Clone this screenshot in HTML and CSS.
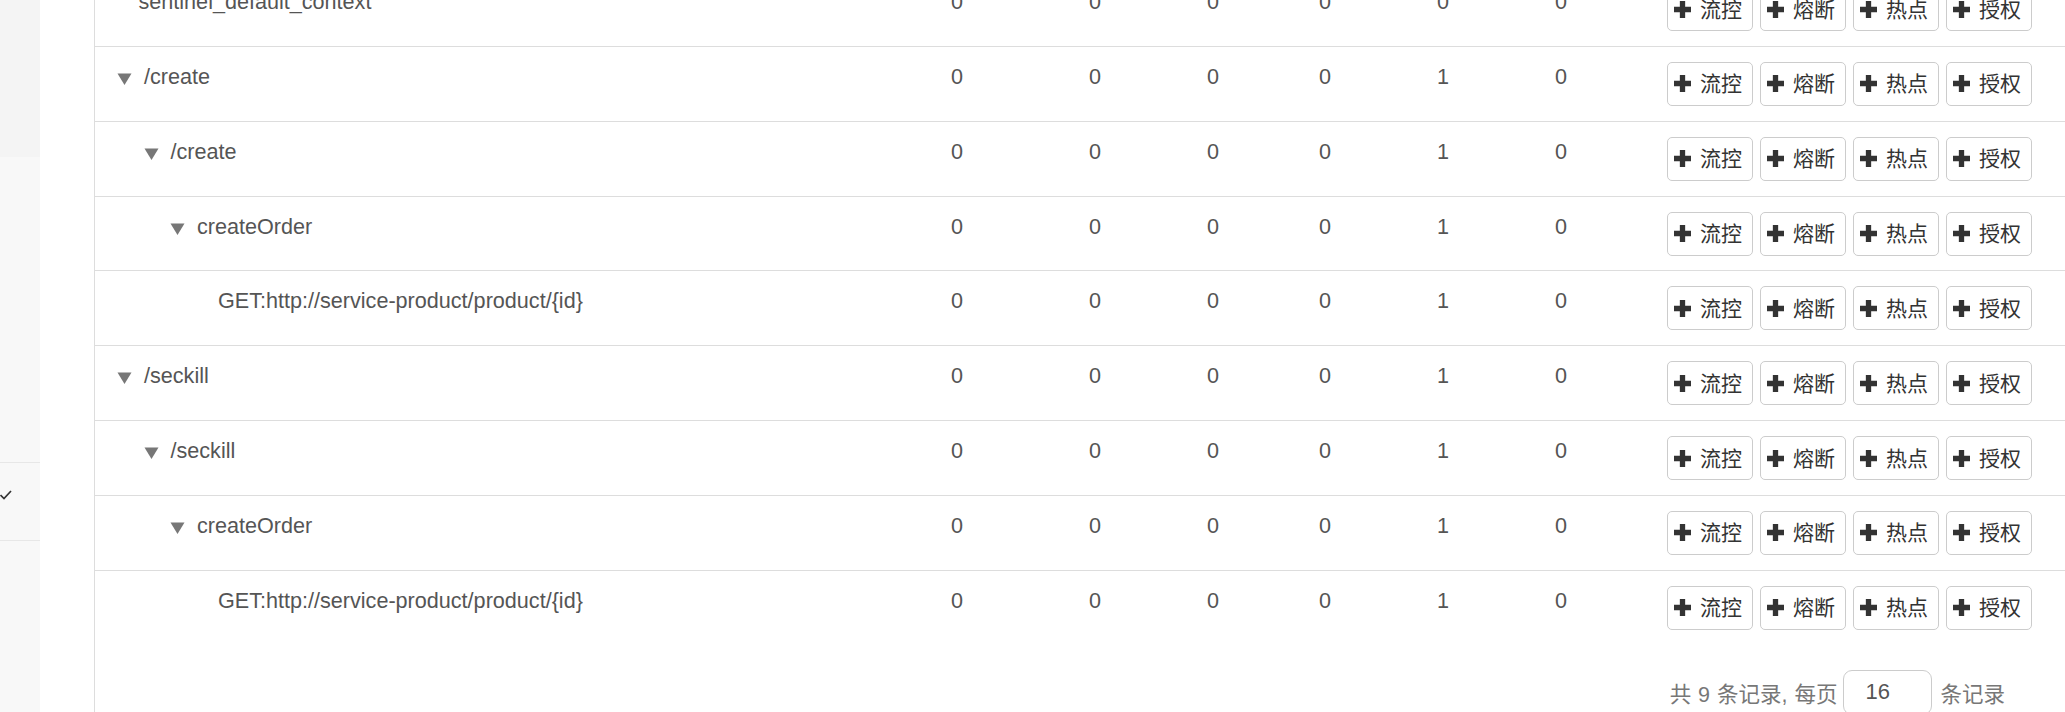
FILE: index.html
```html
<!DOCTYPE html>
<html lang="zh-CN">
<head>
    <meta charset="UTF-8">
    <meta name="viewport" content="width=device-width, initial-scale=1.0">
    <title>簇点链路</title>
    <link rel="stylesheet" href="styles.css">
</head>
<body>
    <div class="layout">
        <aside class="sidebar">
            <div class="side-block active"></div>
            <div class="side-block"></div>
            <div class="side-item">
                <svg class="check" width="12" height="10" viewBox="0 0 12 10"><polyline points="0.5,5 4,8.5 11,1" fill="none" stroke="#333" stroke-width="1.7"/></svg>
            </div>
            <div class="side-item last"></div>
        </aside>

        <main class="main">
            <div class="panel">
                <table class="resource-table">
                    <colgroup>
                        <col class="col-name">
                        <col class="col-pass">
                        <col class="col-block">
                        <col class="col-thread">
                        <col class="col-rt">
                        <col class="col-min">
                        <col class="col-minb">
                        <col>
                    </colgroup>
                    <tbody id="rows"></tbody>
                </table>

                <div class="pager">
                    <span class="pager-text">共 9 条记录, 每页</span>
                    <input type="text" class="page-size" value="16">
                    <span class="pager-text">条记录</span>
                </div>
            </div>
        </main>
    </div>

    <script>
        const resources = [
            { name: 'sentinel_default_context', depth: 0, leaf: true, stats: [0, 0, 0, 0, 0, 0] },
            { name: '/create', depth: 0, leaf: false, stats: [0, 0, 0, 0, 1, 0] },
            { name: '/create', depth: 1, leaf: false, stats: [0, 0, 0, 0, 1, 0] },
            { name: 'createOrder', depth: 2, leaf: false, stats: [0, 0, 0, 0, 1, 0] },
            { name: 'GET:http://service-product/product/{id}', depth: 3, leaf: true, stats: [0, 0, 0, 0, 1, 0] },
            { name: '/seckill', depth: 0, leaf: false, stats: [0, 0, 0, 0, 1, 0] },
            { name: '/seckill', depth: 1, leaf: false, stats: [0, 0, 0, 0, 1, 0] },
            { name: 'createOrder', depth: 2, leaf: false, stats: [0, 0, 0, 0, 1, 0] },
            { name: 'GET:http://service-product/product/{id}', depth: 3, leaf: true, stats: [0, 0, 0, 0, 1, 0] }
        ];

        const actions = ['流控', '熔断', '热点', '授权'];
        const plusIcon = '<svg class="plus" width="16" height="16" viewBox="0 0 16 16"><path d="M5.5 0h5v5.5H16v5h-5.5V16h-5v-5.5H0v-5h5.5z" fill="#333"/></svg>';
        const caret = '<svg class="caret" width="15" height="12" viewBox="0 0 15 12"><polygon points="0.5,0.5 14.5,0.5 7.5,12" fill="#777"/></svg>';

        const tbody = document.getElementById('rows');

        resources.forEach(res => {
            const tr = document.createElement('tr');

            const nameCell = document.createElement('td');
            const node = document.createElement('div');
            node.className = `node depth-${res.depth}` + (res.leaf ? ' leaf' : '');
            node.innerHTML = (res.leaf ? '' : caret);
            const label = document.createElement('span');
            label.className = 'node-name';
            label.textContent = res.name;
            node.appendChild(label);
            nameCell.appendChild(node);
            tr.appendChild(nameCell);

            res.stats.forEach(value => {
                const td = document.createElement('td');
                td.className = 'num';
                td.textContent = value;
                tr.appendChild(td);
            });

            const actionCell = document.createElement('td');
            const group = document.createElement('div');
            group.className = 'actions';
            actions.forEach(text => {
                const btn = document.createElement('button');
                btn.type = 'button';
                btn.className = 'btn-add';
                btn.innerHTML = plusIcon + '<span>' + text + '</span>';
                group.appendChild(btn);
            });
            actionCell.appendChild(group);
            tr.appendChild(actionCell);

            tbody.appendChild(tr);
        });
    </script>
</body>
</html>
```

FILE: styles.css
```css
* {
    margin: 0;
    padding: 0;
    box-sizing: border-box;
}

html,
body {
    height: 100%;
    overflow: hidden;
}

body {
    font-family: 'Liberation Sans', 'Noto Sans CJK SC', sans-serif;
    font-size: 21.6px;
    color: #555;
    background: #fff;
}

.layout {
    display: flex;
    height: 100vh;
    overflow: hidden;
}

/* left menu, only its edge is in view */
.sidebar {
    width: 40px;
    flex: none;
    display: flex;
    flex-direction: column;
    background: #f8f8f8;
}

.side-block {
    height: 305px;
}

.side-block.active {
    height: 157px;
    background: #f4f4f4;
}

.side-item {
    height: 78px;
    border-top: 1px solid #e7e7e7;
    padding-top: 27px;
}

.side-item.last {
    flex: 1;
}

.check {
    display: block;
}

.main {
    flex: 1;
    padding-left: 54px;
}

.panel {
    border-left: 1px solid #ddd;
    margin-top: -29px;
    min-height: calc(100vh + 29px);
}

.resource-table {
    width: 100%;
    border-collapse: collapse;
    table-layout: fixed;
}

.col-name { width: 844px; }
.col-pass { width: 138px; }
.col-block { width: 118px; }
.col-thread { width: 112px; }
.col-rt { width: 118px; }
.col-min { width: 118px; }
.col-minb { width: 112px; }

.resource-table td {
    border-top: 1px solid #ddd;
    padding: 15px 12px 14.85px;
    line-height: 30px;
    vertical-align: top;
    white-space: nowrap;
}

.node {
    display: flex;
    align-items: flex-start;
}

.depth-0 { padding-left: 10px; }
.depth-1 { padding-left: 36.5px; }
.depth-2 { padding-left: 63px; }
.depth-3 { padding-left: 89.5px; }

.caret {
    flex: none;
    width: 15px;
    height: 12px;
    margin-top: 11px;
    margin-right: 12px;
}

.leaf .node-name {
    margin-left: 21.5px;
}

.actions {
    display: flex;
    gap: 7px;
}

.btn-add {
    display: inline-flex;
    align-items: center;
    gap: 9px;
    width: 86px;
    height: 44px;
    padding: 0 0 0 6px;
    border: 1px solid #ccc;
    border-radius: 5px;
    background: #fff;
    color: #333;
    font-family: 'Noto Sans CJK SC', sans-serif;
    font-size: 21px;
    line-height: 30px;
    cursor: pointer;
}

.btn-add span {
    padding-bottom: 3px;
}

.btn-add:hover {
    background: #e6e6e6;
    border-color: #adadad;
}

.plus {
    flex: none;
    width: 17px;
    height: 17px;
}

.pager {
    display: flex;
    align-items: center;
    justify-content: flex-end;
    margin-top: 25px;
    padding-right: 60px;
    color: #777;
}

.pager-text {
    font-size: 21.5px;
    word-spacing: 1px;
}

.page-size {
    width: 89px;
    height: 45px;
    margin: 0 8px 0 6px;
    padding-left: 21px;
    border: 1px solid #ccc;
    border-radius: 9px;
    font-family: 'Liberation Sans', sans-serif;
    font-size: 22px;
    color: #555;
}
```
